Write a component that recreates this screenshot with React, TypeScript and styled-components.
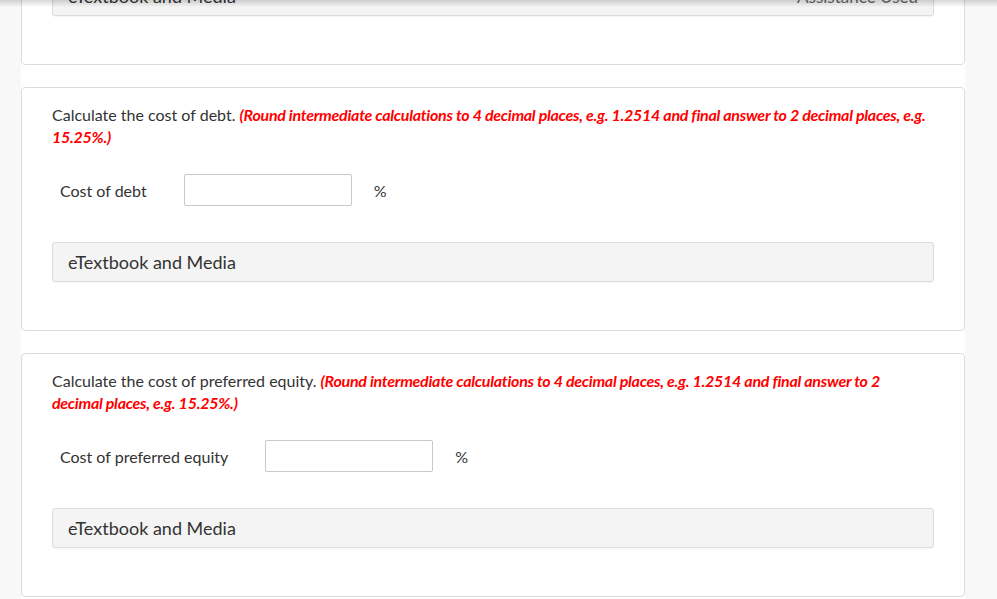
import React from 'react';
import styled, { createGlobalStyle } from 'styled-components';

const GlobalStyle = createGlobalStyle`
    html, body {
        margin: 0;
        padding: 0;
        background: #f8f8f8;
        font-family: Lato, "Open Sans", "Liberation Sans", sans-serif;
        color: #333;
        overflow: hidden;
    }
`;

const TopShade = styled.div`
    position: fixed;
    top: 0;
    left: 0;
    right: 0;
    height: 7px;
    background: linear-gradient(to bottom, rgba(0,0,0,0.16), rgba(0,0,0,0));
    pointer-events: none;
`;

const Page = styled.div`
    width: 944px;
    margin: -41px 0 0 21px;
    background: #fff;
    display: flex;
    flex-direction: column;
    gap: 22px;
    padding-bottom: 40px;
`;

const Panel = styled.section`
    border: 1px solid #dcdcdc;
    border-radius: 4px;
    padding: 16px 30px 48px 30px;
    background: #fff;
    display: flex;
    flex-direction: column;
`;

const Question = styled.p`
    margin: 0;
    padding-right: 5px;
    font-size: 16px;
    line-height: 22px;
    color: #333;
`;

const Hint = styled.span`
    color: #f00;
    font-weight: bold;
    font-style: italic;
    letter-spacing: -0.27px;
`;

const AnswerRow = styled.div`
    display: flex;
    align-items: center;
    margin-top: 26px;
    padding-left: 8px;
`;

const Label = styled.label`
    font-size: 16px;
    color: #333;
    margin-right: 37px;
`;

const Field = styled.input`
    box-sizing: border-box;
    width: 168px;
    height: 32px;
    border: 1px solid #c8c8c8;
    border-radius: 2px;
    background: #fff;
    outline: none;
`;

const Unit = styled.span`
    font-size: 16px;
    color: #333;
    margin-left: 22px;
`;

const MediaBar = styled.div<{ first?: boolean }>`
    box-sizing: border-box;
    height: 40px;
    margin-top: ${p => (p.first ? '0' : '36px')};
    border: 1px solid #dcdcdc;
    border-radius: 3px;
    background: #f4f4f4;
    box-shadow: 0 1px 1px rgba(0,0,0,0.04);
    display: flex;
    align-items: center;
    justify-content: space-between;
    padding: 0 15px;
    font-size: 18px;
    color: #333;
`;

const Assist = styled.span`
    font-size: 17px;
    color: #666;
`;

interface IQuestion {
    prompt: string;
    hint: string;
    label: string;
}

const questions: IQuestion[] = [
    {
        prompt: 'Calculate the cost of debt.',
        hint: '(Round intermediate calculations to 4 decimal places, e.g. 1.2514 and final answer to 2 decimal places, e.g. 15.25%.)',
        label: 'Cost of debt',
    },
    {
        prompt: 'Calculate the cost of preferred equity.',
        hint: '(Round intermediate calculations to 4 decimal places, e.g. 1.2514 and final answer to 2 decimal places, e.g. 15.25%.)',
        label: 'Cost of preferred equity',
    },
];

const App: React.FC = () => {
    return (
        <>
            <GlobalStyle />
            <Page>
                <Panel>
                    <MediaBar first>
                        <span>eTextbook and Media</span>
                        <Assist>Assistance Used</Assist>
                    </MediaBar>
                </Panel>
                {questions.map(q => (
                    <Panel key={q.label}>
                        <Question>
                            {q.prompt} <Hint>{q.hint}</Hint>
                        </Question>
                        <AnswerRow>
                            <Label>{q.label}</Label>
                            <Field type="text" />
                            <Unit>%</Unit>
                        </AnswerRow>
                        <MediaBar>eTextbook and Media</MediaBar>
                    </Panel>
                ))}
            </Page>
            <TopShade />
        </>
    );
};

export default App;
